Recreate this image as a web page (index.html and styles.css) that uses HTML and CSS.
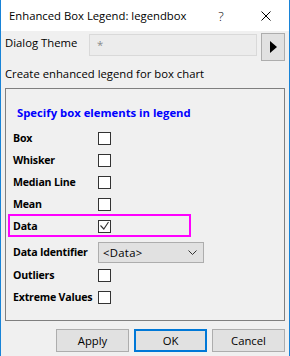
FILE: index.html
```html
<!DOCTYPE html>
<html>
<head>
<meta charset="utf-8">
<link rel="stylesheet" href="styles.css">
</head>
<body>
<div class="window">
  <div class="titlebar">
    <span class="title">Enhanced Box Legend: legendbox</span>
    <span class="help">?</span>
    <svg class="close" width="10" height="10" viewBox="0 0 10 10"><path d="M0.5 0.5 L9.5 9.5 M9.5 0.5 L0.5 9.5" stroke="#000" stroke-width="1" fill="none"/></svg>
  </div>
  <div class="theme-row">
    <span class="theme-label">Dialog Theme</span>
    <div class="theme-input">*</div>
    <div class="arrow-btn"><svg width="7" height="12" viewBox="0 0 7 12"><path d="M0 0 L7 6 L0 12 Z" fill="#000"/></svg></div>
  </div>
  <div class="desc">Create enhanced legend for box chart</div>
  <div class="group">
    <div class="group-title">Specify box elements in legend</div>
    <div class="rows">
      <div class="row"><span class="lbl">Box</span><span class="cb"></span></div>
      <div class="row"><span class="lbl">Whisker</span><span class="cb"></span></div>
      <div class="row"><span class="lbl">Median Line</span><span class="cb"></span></div>
      <div class="row"><span class="lbl">Mean</span><span class="cb"></span></div>
      <div class="row row-hl"><span class="lbl">Data</span><span class="cb"><svg width="11" height="11" viewBox="0 0 11 11"><path d="M1.5 4.5 L4.8 8 L9.5 1" stroke="#333" stroke-width="1.1" fill="none"/></svg></span></div>
      <div class="row row-combo"><span class="lbl">Data Identifier</span><div class="combo"><span class="combo-text">&lt;Data&gt;</span><svg width="9" height="5" viewBox="0 0 9 5"><path d="M0.5 0.5 L4.5 4.5 L8.5 0.5" stroke="#333" stroke-width="1" fill="none"/></svg></div></div>
      <div class="row row-after"><span class="lbl">Outliers</span><span class="cb"></span></div>
      <div class="row"><span class="lbl">Extreme Values</span><span class="cb"></span></div>
    </div>
  </div>
  <div class="buttons">
    <div class="btn">Apply</div>
    <div class="btn btn-default">OK</div>
    <div class="btn">Cancel</div>
  </div>
</div>
</body>
</html>
```
FILE: styles.css
```css
html, body {
  margin: 0;
  padding: 0;
}
body {
  font-family: "Open Sans", "Noto Sans", sans-serif;
  font-size: 11.3px;
  color: #000;
}
.window {
  width: 290px;
  height: 356px;
  box-sizing: border-box;
  border-left: 1px solid #1883d7;
  border-right: 1px solid #1883d7;
  background: #f0f0f0;
  overflow: hidden;
}
.titlebar {
  height: 31px;
  background: #fff;
  display: flex;
  align-items: center;
}
.title {
  flex: 1;
  padding-left: 8px;
  font-size: 11.3px;
  line-height: 16px;
  white-space: nowrap;
}
.help {
  font-size: 13px;
  font-weight: 300;
  line-height: 16px;
  width: 8px;
  text-align: center;
  margin-right: 36px;
}
.close {
  display: block;
  margin-right: 18px;
}
.theme-row {
  display: flex;
  align-items: flex-start;
  height: 30px;
  padding-left: 4px;
}
.theme-label {
  width: 84px;
  line-height: 16px;
  margin-top: 4px;
}
.theme-input {
  width: 168px;
  height: 22px;
  margin-top: 3px;
  box-sizing: border-box;
  border: 1px solid #d9d9d9;
  background: #ececec;
  color: #8a8a8a;
  padding-left: 7px;
  line-height: 20px;
}
.arrow-btn {
  width: 24px;
  height: 28px;
  margin-top: 2px;
  margin-left: 4px;
  box-sizing: border-box;
  border: 1px solid #adadad;
  background: #e1e1e1;
  display: flex;
  align-items: center;
  justify-content: center;
}
.arrow-btn svg {
  display: block;
  margin-left: 1px;
}
.desc {
  padding-left: 4px;
  line-height: 16px;
  margin-top: 5px;
}
.group {
  margin-top: 6px;
  margin-left: 4px;
  width: 280px;
  height: 233px;
  box-sizing: border-box;
  border: 1px solid #7f7f7f;
}
.group-title {
  margin-top: 16px;
  padding-left: 11px;
  color: #0000ff;
  font-weight: bold;
  font-size: 11.3px;
  line-height: 16px;
}
.rows {
  margin-top: 6px;
}
.row {
  display: flex;
  align-items: center;
  height: 22px;
  padding-left: 7px;
}
.lbl {
  width: 85px;
  white-space: nowrap;
  font-weight: bold;
  font-size: 10.6px;
  letter-spacing: -0.2px;
}
.cb {
  width: 13px;
  height: 13px;
  box-sizing: border-box;
  border: 1px solid #333;
  background: #fff;
  display: flex;
  align-items: center;
  justify-content: center;
}
.cb svg {
  display: block;
}
.row-hl {
  position: relative;
}
.row-hl::after {
  content: "";
  position: absolute;
  left: 2px;
  top: -1px;
  width: 183px;
  height: 23px;
  box-sizing: border-box;
  border: 2px solid #ff00ff;
}
.row-combo {
  margin-top: 4px;
}
.row-after {
  margin-top: 1px;
}
.combo {
  width: 106px;
  height: 21px;
  box-sizing: border-box;
  border: 1px solid #adadad;
  background: #e1e1e1;
  display: flex;
  align-items: center;
  justify-content: space-between;
  padding-left: 4px;
  padding-right: 6px;
}
.combo-text {
  letter-spacing: 0.3px;
}
.combo svg {
  display: block;
}
.buttons {
  display: flex;
  justify-content: flex-end;
  gap: 5px;
  padding-right: 4px;
  margin-top: 8px;
}
.btn {
  width: 73px;
  height: 23px;
  box-sizing: border-box;
  border: 1px solid #adadad;
  background: #e1e1e1;
  display: flex;
  align-items: center;
  justify-content: center;
  line-height: 16px;
}
.btn-default {
  border: 2px solid #0078d7;
}
```
